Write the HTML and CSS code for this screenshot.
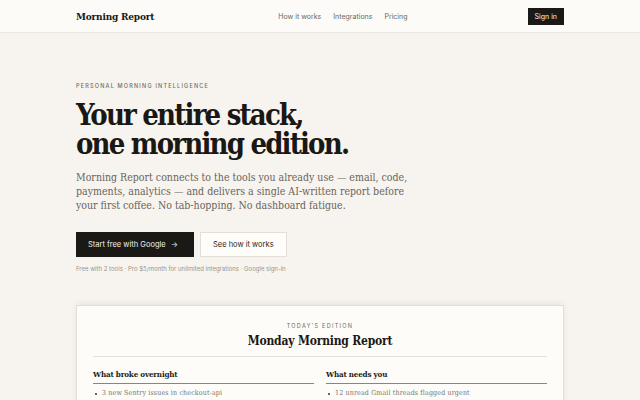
FILE: index.html
```html
<!DOCTYPE html>
<html lang="en">
<head>
<meta charset="utf-8">
<title>Morning Report</title>
<link rel="stylesheet" href="styles.css">
</head>
<body>
<header class="nav">
  <div class="nav-inner">
    <a class="logo" href="#">Morning Report</a>
    <nav class="links">
      <a href="#">How it works</a>
      <a href="#">Integrations</a>
      <a href="#">Pricing</a>
    </nav>
    <a class="signin" href="#">Sign in</a>
  </div>
</header>
<main class="wrap">
  <section class="hero">
    <p class="eyebrow">Personal morning intelligence</p>
    <h1 class="title">Your entire stack,<br>one morning edition.</h1>
    <p class="lead">Morning Report connects to the tools you already use — email, code, payments, analytics — and delivers a single AI-written report before your first coffee. No tab-hopping. No dashboard fatigue.</p>
    <div class="actions">
      <a class="btn btn-dark" href="#">Start free with Google <span class="arrow">→</span></a>
      <a class="btn btn-light" href="#">See how it works</a>
    </div>
    <p class="fine">Free with 2 tools · Pro $5/month for unlimited integrations · Google sign-in</p>
  </section>
  <section class="card">
    <p class="card-eyebrow">Today’s edition</p>
    <h2 class="card-title">Monday Morning Report</h2>
    <div class="cols">
      <div class="col">
        <h3 class="col-head">What broke overnight</h3>
        <ul class="items">
          <li>3 new Sentry issues in checkout-api</li>
          <li>Deploy #482 rolled back at 2:14am</li>
        </ul>
      </div>
      <div class="col">
        <h3 class="col-head">What needs you</h3>
        <ul class="items">
          <li>12 unread Gmail threads flagged urgent</li>
          <li>2 pull requests awaiting your review</li>
        </ul>
      </div>
    </div>
  </section>
</main>
</body>
</html>
```
FILE: styles.css
```css
* { box-sizing: border-box; }
html, body { margin: 0; padding: 0; }
body {
  background: #f7f4ef;
  color: #1c1a17;
  font-family: "Liberation Serif", serif;
  height: 400px;
  overflow: hidden;
}
a { text-decoration: none; color: inherit; }
p, h1, h2, h3, ul { margin: 0; }

/* display serif: condensed DejaVu keeps the tall x-height */
.logo, .title, .card-title, .col-head, .lead, .items {
  font-family: "DejaVu Serif Condensed", "DejaVu Serif", serif;
  font-stretch: condensed;
}

.nav {
  background: #fcfbf7;
  border-bottom: 1px solid #ebe7e0;
  height: 33px;
}
.nav-inner {
  width: 488px;
  margin: 0 auto;
  height: 100%;
  display: flex;
  align-items: center;
}
.logo {
  font-weight: bold;
  font-size: 10px;
  letter-spacing: -0.2px;
  color: #1a1814;
}
.links {
  display: flex;
  gap: 12px;
  margin-left: 124px;
  font-family: "Inter", sans-serif;
  font-size: 7px;
  color: #6d6860;
}
.signin {
  margin-left: auto;
  background: #1b1916;
  color: #f3f0ea;
  font-family: "Inter", sans-serif;
  font-size: 7px;
  padding: 0 7px;
  height: 17px;
  line-height: 17px;
}

.wrap {
  width: 488px;
  margin: 0 auto;
}
.hero { padding-top: 50px; }
.eyebrow {
  font-family: "Inter", sans-serif;
  font-size: 5.5px;
  letter-spacing: 1.2px;
  text-transform: uppercase;
  color: #6f6a62;
  font-weight: 500;
}
.title {
  margin-top: 12px;
  font-weight: bold;
  font-size: 29px;
  line-height: 29px;
  letter-spacing: -1.8px;
  color: #1a1814;
}
.lead {
  margin-top: 11px;
  width: 344px;
  font-size: 10.5px;
  line-height: 14px;
  color: #6a645b;
}
.actions {
  margin-top: 20px;
  display: flex;
  gap: 6px;
}
.btn {
  font-family: "Inter", sans-serif;
  font-size: 7.5px;
  height: 25px;
  line-height: 25px;
  padding: 0 12px;
}
.btn-dark { background: #1b1916; color: #f4f1ea; width: 118px; }
.arrow { margin-left: 3px; }
.btn-light {
  background: #fefdfa;
  border: 1px solid #e3dfd7;
  line-height: 23px;
  color: #2a2722;
}
.fine {
  margin-top: 8px;
  font-family: "Inter", sans-serif;
  font-size: 6px;
  color: #9a948a;
}

.card {
  margin-top: 33px;
  background: #fdfcf8;
  border: 1px solid #e2ded6;
  box-shadow: 0 -2px 6px rgba(80, 70, 55, 0.08);
  padding: 17px 16px 20px;
}
.card-eyebrow {
  text-align: center;
  font-family: "Inter", sans-serif;
  font-size: 5.5px;
  letter-spacing: 1.3px;
  text-transform: uppercase;
  color: #6f6a62;
}
.card-title {
  margin-top: 5px;
  text-align: center;
  font-weight: bold;
  font-size: 12px;
  letter-spacing: -0.2px;
  color: #1a1814;
  padding-bottom: 8px;
  border-bottom: 1px solid #e6e2da;
}
.cols {
  margin-top: 12px;
  display: grid;
  grid-template-columns: 1fr 1fr;
  gap: 12px;
}
.col-head {
  font-weight: bold;
  font-size: 8px;
  letter-spacing: -0.2px;
  color: #1f1c18;
  padding-bottom: 4px;
  border-bottom: 1px solid #8a857d;
}
.items {
  list-style: none;
  padding: 0;
  margin-top: 5px;
  font-size: 7px;
  letter-spacing: 0.15px;
  color: #7a746b;
}
.items li {
  position: relative;
  padding-left: 9px;
  margin-bottom: 5px;
}
.items li::before {
  content: "";
  position: absolute;
  left: 2px;
  top: 4px;
  width: 2px;
  height: 2px;
  background: #6a645b;
}
```
